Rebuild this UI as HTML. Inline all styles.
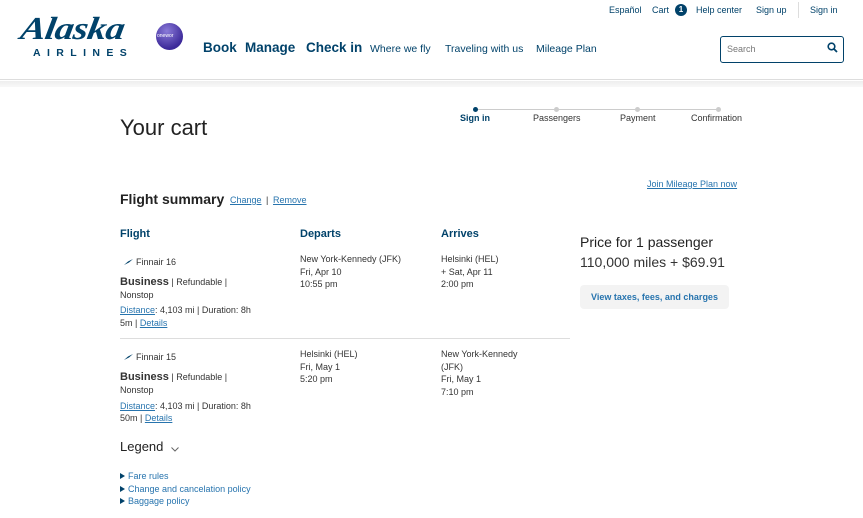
<!DOCTYPE html>
<html><head><meta charset="utf-8"><style>
*{margin:0;padding:0;box-sizing:border-box}
body{width:863px;height:518px;overflow:hidden;background:#fff;font-family:"Liberation Sans",Arial,sans-serif;color:#333;position:relative}
.a{position:absolute;white-space:nowrap}
.n{color:#01426a}
.l{color:#2774ae}
.u{text-decoration:underline}
.s{font-size:9px}
.li{height:12.5px;line-height:12.5px}
</style></head><body>
<div class="a" style="left:0;top:0;width:863px;height:80px;background:#fff;border-bottom:1px solid #ddd"></div>
<div class="a" style="left:0;top:81px;width:863px;height:6px;background:linear-gradient(#eee,#f8f8f8)"></div>
<div class="a n" style="left:24px;top:10px;font-family:'Liberation Serif',serif;font-style:italic;font-weight:bold;font-size:32px;letter-spacing:-0.5px;transform:scaleX(1.18) skewX(-8deg);transform-origin:left top">Alaska</div>
<div class="a n" style="left:33px;top:47px;font-size:10.5px;font-weight:bold;letter-spacing:6.4px">AIRLINES</div>
<div class="a" style="left:156px;top:23px;width:27px;height:27px;border-radius:50%;background:radial-gradient(circle at 40% 30%,#8a7ad8,#3d2a9a 70%)"></div>
<div class="a" style="left:157px;top:33px;font-size:5px;color:#fff">onewor</div>
<div class="a n" style="left:203px;top:40px;font-size:13.5px;font-weight:bold">Book</div>
<div class="a n" style="left:245px;top:40px;font-size:13.5px;font-weight:bold">Manage</div>
<div class="a n" style="left:306px;top:40px;font-size:13.5px;font-weight:bold">Check in</div>
<div class="a n" style="left:370px;top:43px;font-size:10.5px">Where we fly</div>
<div class="a n" style="left:445px;top:43px;font-size:10.5px">Traveling with us</div>
<div class="a n" style="left:536px;top:43px;font-size:10.5px">Mileage Plan</div>
<div class="a n s" style="left:609px;top:5px">Español</div>
<div class="a n s" style="left:652px;top:5px">Cart</div>
<div class="a" style="left:675px;top:4px;width:12px;height:12px;border-radius:50%;background:#01426a;color:#fff;font-size:8px;font-weight:bold;text-align:center;line-height:12px">1</div>
<div class="a n s" style="left:696px;top:5px">Help center</div>
<div class="a n s" style="left:756px;top:5px">Sign up</div>
<div class="a" style="left:798px;top:2px;width:1px;height:16px;background:#ddd"></div>
<div class="a n s" style="left:810px;top:5px">Sign in</div>
<div class="a" style="left:720px;top:36px;width:124px;height:27px;border:1.5px solid #01426a;border-radius:3px"></div>
<div class="a" style="left:727px;top:44px;font-size:9px;color:#777">Search</div>
<svg class="a" style="left:827px;top:42px" width="11" height="11" viewBox="0 0 11 11"><circle cx="4.5" cy="4.5" r="3.3" fill="none" stroke="#01426a" stroke-width="1.6"/><path d="M7 7l3 3" stroke="#01426a" stroke-width="1.8"/></svg>
<div class="a" style="left:475px;top:109px;width:244px;height:1px;background:#ccc"></div>
<div class="a" style="left:473px;top:107px;width:5px;height:5px;border-radius:50%;background:#01426a"></div>
<div class="a" style="left:554px;top:107px;width:5px;height:5px;border-radius:50%;background:#ccc"></div>
<div class="a" style="left:635px;top:107px;width:5px;height:5px;border-radius:50%;background:#ccc"></div>
<div class="a" style="left:716px;top:107px;width:5px;height:5px;border-radius:50%;background:#ccc"></div>
<div class="a n s" style="left:460px;top:113px;font-weight:bold">Sign in</div>
<div class="a s" style="left:533px;top:113px">Passengers</div>
<div class="a s" style="left:620px;top:113px">Payment</div>
<div class="a s" style="left:691px;top:113px">Confirmation</div>
<div class="a" style="left:120px;top:115px;font-size:22px;color:#222">Your cart</div>
<div class="a" style="left:120px;top:191px;font-size:14px;font-weight:bold;color:#222">Flight summary</div>
<div class="a l u s" style="left:230px;top:195px">Change</div>
<div class="a s" style="left:266px;top:195px">|</div>
<div class="a l u s" style="left:273px;top:195px">Remove</div>
<div class="a l u s" style="left:647px;top:179px">Join Mileage Plan now</div>
<div class="a n" style="left:120px;top:228px;font-size:11px;font-weight:bold">Flight</div>
<div class="a n" style="left:300px;top:228px;font-size:11px;font-weight:bold">Departs</div>
<div class="a n" style="left:441px;top:228px;font-size:11px;font-weight:bold">Arrives</div>
<svg class="a" style="left:124px;top:259px" width="9" height="6" viewBox="0 0 9 6"><path d="M0 6L4 2.5L9 0L5 3.5Z" fill="#01426a"/></svg>
<div class="a s" style="left:136px;top:257px">Finnair 16</div>
<div class="a s" style="left:120px;top:276px;line-height:12.5px"><b style="font-size:11px">Business</b> | Refundable |<br>Nonstop</div>
<div class="a s" style="left:120px;top:304px;line-height:13px"><span class="l u">Distance</span>: 4,103 mi | Duration: 8h<br>5m | <span class="l u">Details</span></div>
<div class="a s" style="left:300px;top:253px;line-height:12.5px">New York-Kennedy (JFK)<br>Fri, Apr 10<br>10:55 pm</div>
<div class="a s" style="left:441px;top:253px;line-height:12.5px">Helsinki (HEL)<br>+ Sat, Apr 11<br>2:00 pm</div>
<div class="a" style="left:120px;top:338px;width:450px;height:1px;background:#ddd"></div>
<svg class="a" style="left:124px;top:354px" width="9" height="6" viewBox="0 0 9 6"><path d="M0 6L4 2.5L9 0L5 3.5Z" fill="#01426a"/></svg>
<div class="a s" style="left:136px;top:352px">Finnair 15</div>
<div class="a s" style="left:120px;top:371px;line-height:12.5px"><b style="font-size:11px">Business</b> | Refundable |<br>Nonstop</div>
<div class="a s" style="left:120px;top:400px;line-height:12px"><span class="l u">Distance</span>: 4,103 mi | Duration: 8h<br>50m | <span class="l u">Details</span></div>
<div class="a s" style="left:300px;top:348px;line-height:12.5px">Helsinki (HEL)<br>Fri, May 1<br>5:20 pm</div>
<div class="a s" style="left:441px;top:348px;line-height:12.5px">New York-Kennedy<br>(JFK)<br>Fri, May 1<br>7:10 pm</div>
<div class="a" style="left:120px;top:439px;font-size:13px;color:#222">Legend</div>
<svg class="a" style="left:171px;top:447px" width="8" height="5" viewBox="0 0 8 5"><path d="M0.5 0.5L4 4L7.5 0.5" fill="none" stroke="#666" stroke-width="1"/></svg>
<div class="a s l" style="left:120px;top:470px">
<div class="li"><span style="display:inline-block;width:0;height:0;border-left:5px solid #01426a;border-top:3px solid transparent;border-bottom:3px solid transparent;margin-right:3px"></span>Fare rules</div>
<div class="li"><span style="display:inline-block;width:0;height:0;border-left:5px solid #01426a;border-top:3px solid transparent;border-bottom:3px solid transparent;margin-right:3px"></span>Change and cancelation policy</div>
<div class="li"><span style="display:inline-block;width:0;height:0;border-left:5px solid #01426a;border-top:3px solid transparent;border-bottom:3px solid transparent;margin-right:3px"></span>Baggage policy</div>
</div>
<div class="a" style="left:580px;top:234px;font-size:14px;color:#222">Price for 1 passenger</div>
<div class="a" style="left:580px;top:254px;font-size:14px;color:#333">110,000 miles + $69.91</div>
<div class="a" style="left:580px;top:285px;width:149px;height:24px;background:#f3f3f3;border-radius:4px;font-size:9px;font-weight:bold;color:#2774ae;text-align:center;line-height:24px">View taxes, fees, and charges</div>
</body></html>
